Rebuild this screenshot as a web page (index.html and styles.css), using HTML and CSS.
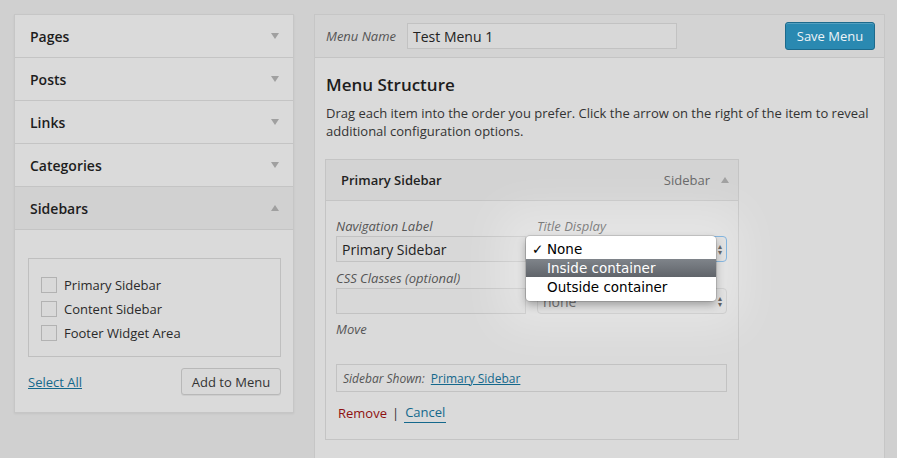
FILE: index.html
```html
<!DOCTYPE html>
<html>
<head>
<meta charset="utf-8">
<link rel="stylesheet" href="styles.css">
</head>
<body>
<div class="wrap">
  <div class="left">
    <div class="acc-head"><span>Pages</span><span class="tri down"></span></div>
    <div class="acc-head"><span>Posts</span><span class="tri down"></span></div>
    <div class="acc-head"><span>Links</span><span class="tri down"></span></div>
    <div class="acc-head"><span>Categories</span><span class="tri down"></span></div>
    <div class="acc-head open"><span>Sidebars</span><span class="tri up"></span></div>
    <div class="acc-body">
      <div class="checklist">
        <label class="chk"><span class="box"></span>Primary Sidebar</label>
        <label class="chk"><span class="box"></span>Content Sidebar</label>
        <label class="chk"><span class="box"></span>Footer Widget Area</label>
      </div>
      <div class="acc-actions">
        <a class="link" href="#">Select All</a>
        <button class="btn">Add to Menu</button>
      </div>
    </div>
  </div>

  <div class="right">
    <div class="right-head">
      <span class="menu-name-label">Menu Name</span>
      <div class="input name-input">Test Menu 1</div>
      <button class="btn-primary">Save Menu</button>
    </div>
    <div class="right-body">
      <h2 class="title">Menu Structure</h2>
      <p class="desc">Drag each item into the order you prefer. Click the arrow on the right of the item to reveal additional configuration options.</p>

      <div class="item">
        <div class="item-head">
          <span class="item-title">Primary Sidebar</span>
          <span class="item-type">Sidebar <span class="tri up"></span></span>
        </div>
        <div class="item-body">
          <div class="grid">
            <div class="field">
              <div class="flabel">Navigation Label</div>
              <div class="input">Primary Sidebar</div>
            </div>
            <div class="field">
              <div class="flabel">Title Display</div>
              <div class="select focus"><span class="hidden-val">None</span><span class="updown">&#x25B4;<br>&#x25BE;</span></div>
              <div class="dropdown">
                <div class="opt"><span class="check">✓</span>None</div>
                <div class="opt sel">Inside container</div>
                <div class="opt">Outside container</div>
              </div>
            </div>
            <div class="field">
              <div class="flabel">CSS Classes (optional)</div>
              <div class="input"></div>
            </div>
            <div class="field">
              <div class="flabel">&nbsp;</div>
              <div class="select">none<span class="updown">&#x25B4;<br>&#x25BE;</span></div>
            </div>
          </div>
          <div class="flabel move">Move</div>
          <div class="shown"><em>Sidebar Shown:</em> <a class="link" href="#">Primary Sidebar</a></div>
          <div class="item-actions">
            <a class="remove" href="#">Remove</a><span class="sep">|</span><a class="cancel" href="#">Cancel</a>
          </div>
        </div>
      </div>
    </div>
  </div>
</div>
</body>
</html>
```

FILE: styles.css
```css
html, body {
  margin: 0;
  height: 100%;
  overflow: hidden;
}
body {
  background: #d0d0d0;
  font-family: "Open Sans", "DejaVu Sans", sans-serif;
  color: #222;
  font-size: 13px;
}
.wrap {
  display: flex;
  align-items: flex-start;
  gap: 20px;
  padding: 14px 0 0 14px;
}
.left {
  width: 280px;
  box-sizing: border-box;
  background: #dadada;
  border: 1px solid #c6c6c6;
  box-shadow: 0 1px 2px rgba(0,0,0,0.06);
}
.acc-head {
  height: 42px;
  border-bottom: 1px solid #c4c4c4;
  display: flex;
  align-items: center;
  justify-content: space-between;
  padding: 0 14px 0 15px;
  font-size: 14px;
  font-weight: 600;
  color: #1d1d1d;
}
.acc-head.open {
  background: #d1d1d1;
}
.tri {
  display: inline-block;
  width: 0;
  height: 0;
  border-left: 4px solid transparent;
  border-right: 4px solid transparent;
}
.tri.down { border-top: 6px solid #a0a0a0; }
.tri.up { border-bottom: 6px solid #a0a0a0; }
.acc-body {
  padding: 28px 12px 17px 13px;
}
.checklist {
  border: 1px solid #bfbfbf;
  padding: 18px 12px 15px;
  display: flex;
  flex-direction: column;
  gap: 8px;
}
.chk {
  display: flex;
  align-items: center;
  gap: 7px;
  height: 16px;
  color: #2a2a2a;
}
.box {
  width: 14px;
  height: 14px;
  border: 1px solid #b2b2b2;
  background: #d9d9d9;
}
.acc-actions {
  display: flex;
  justify-content: space-between;
  align-items: center;
  margin-top: 11px;
}
.link {
  color: #14688c;
  text-decoration: underline;
}
.btn {
  height: 27px;
  width: 100px;
  border: 1px solid #b8b8b8;
  border-radius: 3px;
  background: #d8d8d8;
  font-family: inherit;
  font-size: 13px;
  color: #333;
  box-shadow: 0 1px 0 rgba(0,0,0,0.06);
  padding: 0;
}
.right {
  width: 571px;
  box-sizing: border-box;
  background: #dadada;
  border: 1px solid #c6c6c6;
  height: 470px;
}
.right-head {
  height: 42px;
  border-bottom: 1px solid #c4c4c4;
  background: #d3d3d3;
  display: flex;
  align-items: center;
  padding: 0 9px 0 11px;
}
.menu-name-label {
  font-style: italic;
  color: #555;
  margin-right: 11px;
}
.input {
  box-sizing: border-box;
  height: 26px;
  border: 1px solid #c2c2c2;
  background: #d8d8d8;
  padding: 0 5px;
  display: flex;
  align-items: center;
  font-size: 14px;
  color: #222;
}
.name-input {
  width: 270px;
  padding-left: 5px;
}
.btn-primary {
  margin-left: auto;
  width: 90px;
  height: 28px;
  border: 1px solid #1d6a8c;
  border-radius: 3px;
  background: #2a89b1;
  color: #eef4f7;
  font-family: inherit;
  font-size: 13px;
  padding: 0;
  box-shadow: inset 0 1px 0 rgba(255,255,255,0.2);
}
.right-body {
  padding: 0 11px;
}
.title {
  font-size: 17px;
  font-weight: 600;
  margin: 15px 0 0;
  color: #1d1d1d;
  line-height: 24px;
}
.desc {
  margin: 7px 0 0;
  line-height: 18px;
  color: #333;
}
.item {
  margin: 19px 0 0 -1px;
  width: 414px;
  box-sizing: border-box;
  border: 1px solid #c4c4c4;
}
.item-head {
  height: 40px;
  background: #d3d3d3;
  border-bottom: 1px solid #c4c4c4;
  display: flex;
  align-items: center;
  justify-content: space-between;
  padding: 0 9px 0 15px;
}
.item-title {
  font-weight: 600;
  color: #222;
}
.item-type {
  color: #666;
  display: flex;
  align-items: center;
  gap: 11px;
}
.item-body {
  padding: 16px 11px 16px 10px;
}
.grid {
  display: grid;
  grid-template-columns: 190px 190px;
  column-gap: 11px;
  row-gap: 7px;
}
.field {
  position: relative;
}
.flabel {
  font-style: italic;
  color: #555;
  line-height: 18px;
  margin-bottom: 1px;
}
.select {
  box-sizing: border-box;
  height: 26px;
  border: 1px solid #c2c2c2;
  border-radius: 4px;
  background: #d8d8d8;
  display: flex;
  align-items: center;
  justify-content: space-between;
  padding: 0 4px 0 5px;
  font-size: 14px;
  color: #444;
}
.select.focus {
  border-color: #5e9fd6;
}
.hidden-val {
  visibility: hidden;
}
.updown {
  font-size: 8px;
  line-height: 6px;
  color: #333;
}
.dropdown {
  position: absolute;
  left: -11px;
  top: 19px;
  width: 190px;
  background: #fff;
  border-radius: 4px;
  padding: 4px 0 4px;
  font-family: "DejaVu Sans", "Liberation Sans", sans-serif;
  font-size: 13.5px;
  color: #000;
  box-shadow: 0 0 0 1px rgba(0,0,0,0.12), 0 4px 8px rgba(0,0,0,0.3), 0 0 44px 26px rgba(255,255,255,0.32);
  z-index: 5;
}
.opt {
  height: 18px;
  line-height: 18px;
  padding-left: 21px;
  position: relative;
  margin-bottom: 1px;
}
.opt .check {
  position: absolute;
  left: 6px;
}
.opt.sel {
  background: linear-gradient(#7f848a, #60646a);
  color: #fff;
}
.move {
  margin-top: 6px;
}
.shown {
  margin-top: 26px;
  box-sizing: border-box;
  height: 28px;
  border: 1px solid #c2c2c2;
  display: flex;
  align-items: center;
  padding: 0 6px;
  font-size: 12px;
  color: #555;
}
.shown em {
  margin-right: 6px;
}
.item-actions {
  margin-top: 11px;
  display: flex;
  align-items: center;
  font-size: 13px;
  padding-left: 2px;
}
.remove {
  color: #8e1010;
  text-decoration: none;
}
.sep {
  margin: 0 5px;
  color: #333;
}
.cancel {
  color: #14688c;
  text-decoration: none;
  border-bottom: 1px solid #14688c;
  padding: 0 1px 1px;
}
```
